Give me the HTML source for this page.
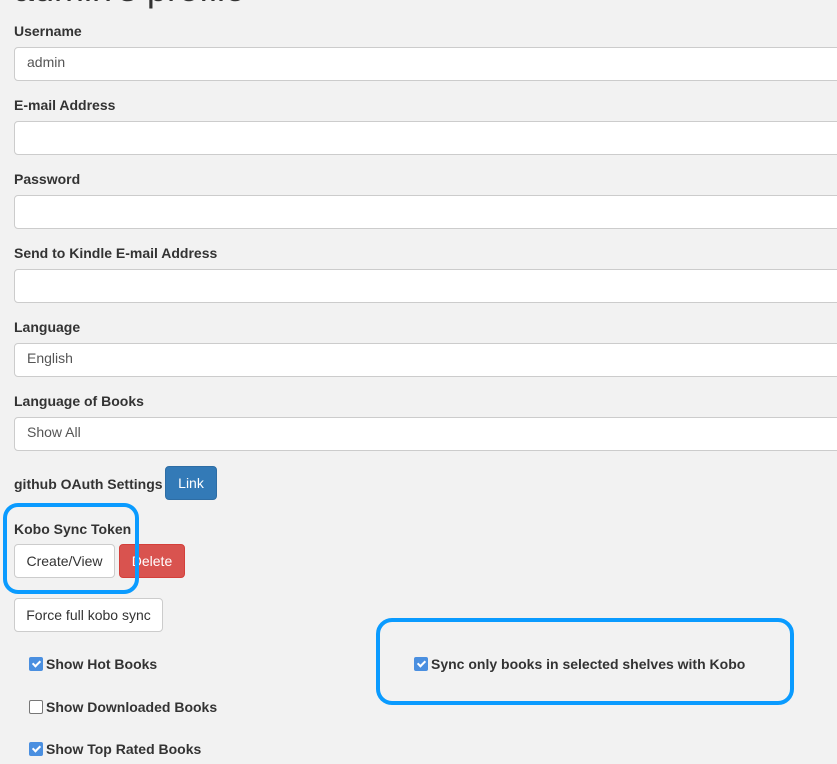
<!DOCTYPE html>
<html><head><meta charset="utf-8">
<style>
body{margin:0;width:837px;height:764px;background:#f2f2f2;font-family:"Liberation Sans",Arial,sans-serif;color:#333;overflow:hidden;position:relative}
h1{position:absolute;left:14px;top:-32px;margin:0;font-size:36px;font-weight:500;color:#333}
.lbl{position:absolute;left:14px;font-size:14px;font-weight:bold;color:#333}
.inp{position:absolute;left:14px;width:840px;background:#fff;border:1px solid #ccc;border-radius:4px;font-size:14px;color:#555;line-height:29px;padding-left:12px;box-sizing:border-box;height:34px}
.btn{position:absolute;height:34px;border-radius:4px;font-size:14px;line-height:32px;text-align:center;box-sizing:border-box;border:1px solid}
.cb{position:absolute;left:29px;font-size:14px;font-weight:bold;color:#333;display:flex;align-items:center}
.box{width:14px;height:14px;border-radius:2px;margin-right:3px;box-sizing:border-box;display:inline-block;position:relative}
.on{background:#4a8fe0}
.on:after{content:"";position:absolute;left:4.5px;top:2px;width:3px;height:6px;border:solid #fff;border-width:0 2px 2px 0;transform:rotate(45deg)}
.off{background:#fff;border:1.5px solid #777}
.hl{position:absolute;border:4px solid #0a9bff;box-sizing:border-box}
</style></head><body>
<h1>admin's profile</h1>
<div class="lbl" style="top:23px">Username</div>
<div class="inp" style="top:47px">admin</div>
<div class="lbl" style="top:97px">E-mail Address</div>
<div class="inp" style="top:121px"></div>
<div class="lbl" style="top:171px">Password</div>
<div class="inp" style="top:195px"></div>
<div class="lbl" style="top:245px">Send to Kindle E-mail Address</div>
<div class="inp" style="top:269px"></div>
<div class="lbl" style="top:319px">Language</div>
<div class="inp" style="top:343px">English</div>
<div class="lbl" style="top:393px">Language of Books</div>
<div class="inp" style="top:417px">Show All</div>
<div class="lbl" style="top:476px">github OAuth Settings</div>
<div class="btn" style="left:165px;top:466px;width:52px;background:#337ab7;border-color:#2e6da4;color:#fff">Link</div>
<div class="lbl" style="top:521px">Kobo Sync Token</div>
<div class="btn" style="left:14px;top:544px;width:101px;background:#fff;border-color:#ccc;color:#333">Create/View</div>
<div class="btn" style="left:119px;top:544px;width:66px;background:#d9534f;border-color:#d43f3a;color:#fff">Delete</div>
<div class="btn" style="left:14px;top:598px;width:149px;background:#fff;border-color:#ccc;color:#333">Force full kobo sync</div>
<div class="cb" style="top:656px"><span class="box on"></span>Show Hot Books</div>
<div class="cb" style="top:699px"><span class="box off"></span>Show Downloaded Books</div>
<div class="cb" style="top:741px"><span class="box on"></span>Show Top Rated Books</div>
<div class="cb" style="left:414px;top:656px"><span class="box on"></span>Sync only books in selected shelves with Kobo</div>
<div class="hl" style="left:3px;top:503px;width:136px;height:91px;border-radius:15px"></div>
<div class="hl" style="left:376px;top:618px;width:418px;height:87px;border-radius:16px"></div>
</body></html>
